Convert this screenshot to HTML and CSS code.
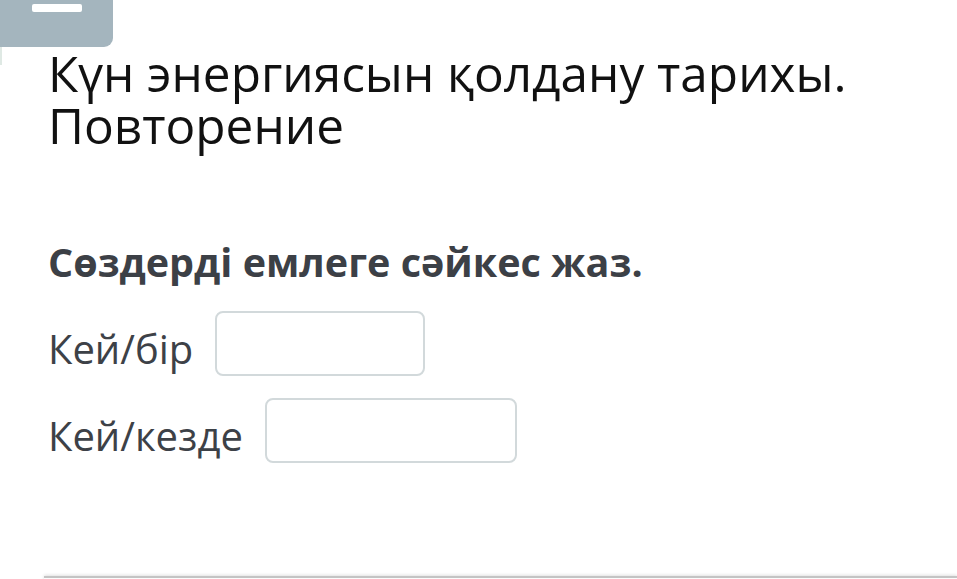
FILE: index.html
```html
<!DOCTYPE html>
<html lang="kk">
<head>
<meta charset="utf-8">
<title>Күн энергиясын қолдану тарихы</title>
<link rel="stylesheet" href="styles.css">
</head>
<body>
<div class="page">
  <div class="tab"><span class="tab-bar"></span></div>
  <div class="side-strip"></div>
  <main class="content">
    <h1 class="title">Күн энергиясын қолдану тарихы.<br>Повторение</h1>
    <h2 class="task">Сөздерді емлеге сәйкес жаз.</h2>
    <div class="row row-first">
      <span class="label">Кей/бір</span>
      <input class="field field-short" type="text" aria-label="Кей/бір">
    </div>
    <div class="row">
      <span class="label">Кей/кезде</span>
      <input class="field field-long" type="text" aria-label="Кей/кезде">
    </div>
  </main>
  <div class="footer-card"></div>
</div>
</body>
</html>
```

FILE: styles.css
```css
html, body {
  margin: 0;
  padding: 0;
  background: #ffffff;
}

.page {
  position: relative;
  width: 957px;
  height: 579px;
  overflow: hidden;
  font-family: "Open Sans", "Noto Sans", sans-serif;
}

.tab {
  width: 113px;
  height: 47px;
  background: #a4b5be;
  border-bottom-right-radius: 9px;
  position: relative;
}

.tab-bar {
  position: absolute;
  left: 32px;
  top: 4px;
  width: 50px;
  height: 8px;
  border-radius: 2px;
  background: #ffffff;
}

.side-strip {
  position: absolute;
  left: 0;
  top: 47px;
  width: 2px;
  height: 18px;
  background: #dfe9e4;
}

.content {
  padding-left: 48px;
}

.title {
  margin: 0;
  font-size: 49.5px;
  line-height: 52px;
  font-weight: 400;
  color: #111111;
}

.task {
  margin: 87px 0 0 0;
  font-size: 39.5px;
  line-height: 48px;
  font-weight: 700;
  color: #3c4046;
}

.row {
  display: flex;
  align-items: flex-start;
  gap: 22px;
  margin-top: 22px;
}

.row-first {
  margin-top: 25px;
}

.label {
  font-size: 40px;
  line-height: 48px;
  margin-top: 14px;
  color: #3d4147;
}

.field {
  box-sizing: border-box;
  height: 65px;
  border: 2px solid #d2d9db;
  border-radius: 8px;
  background: #ffffff;
  outline: none;
  padding: 0 12px;
  font: inherit;
}

.field-short {
  width: 210px;
}

.field-long {
  width: 252px;
}

.footer-card {
  position: absolute;
  left: 44px;
  right: 0;
  top: 576px;
  height: 10px;
  border-top: 2px solid #c4c4c4;
  background: #fcfcfc;
  box-shadow: 0 -1px 3px rgba(0, 0, 0, 0.12);
}
```
